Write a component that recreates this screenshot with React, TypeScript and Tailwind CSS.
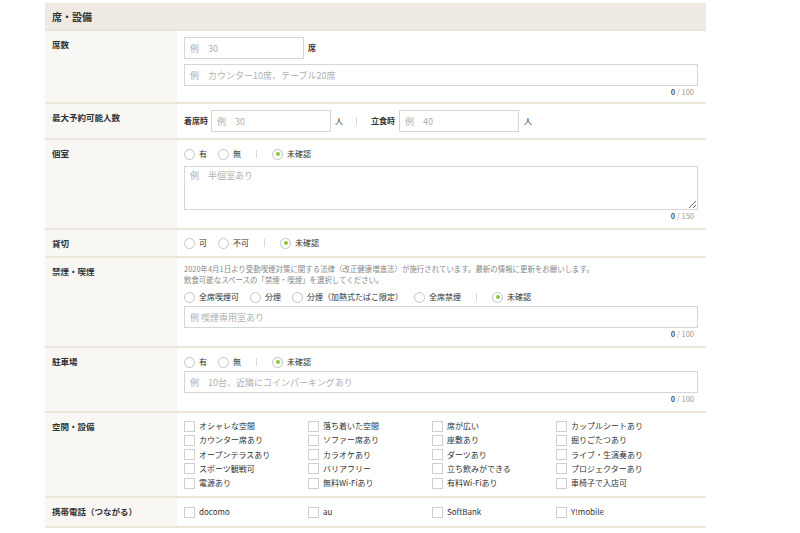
import React from "react";

const font = { fontFamily: '"Noto Sans CJK JP", "Noto Sans", sans-serif' };

function Radio({ label, checked }: { label: string; checked?: boolean }) {
  return (
    <span className="flex items-center mr-[11px]">
      <span className="w-[11px] h-[11px] rounded-full border border-[#c4c4c4] bg-white flex items-center justify-center shrink-0">
        {checked && <span className="w-[4px] h-[4px] rounded-full bg-[#8cc63f]" />}
      </span>
      <span className="ml-[4px] text-[8px] text-[#333] whitespace-nowrap">{label}</span>
    </span>
  );
}

function Sep() {
  return <span className="w-px h-[8px] bg-[#d8d8d8] ml-[4px] mr-[15px]" />;
}

function Check({ label }: { label: string }) {
  return (
    <span className="flex items-center h-[14.25px]">
      <span className="w-[11px] h-[11px] border border-[#cfcfcf] bg-white shrink-0" />
      <span className="ml-[4px] text-[8px] text-[#333] whitespace-nowrap">{label}</span>
    </span>
  );
}

function Counter({ max }: { max: number }) {
  return (
    <div className="h-[12px] leading-[12px] text-right pr-[4px] text-[7.5px] text-[#999]">
      <span className="text-[#555] font-bold">0</span> / {max}
    </div>
  );
}

function TextInput({ placeholder, className }: { placeholder: string; className?: string }) {
  return (
    <input
      placeholder={placeholder}
      style={font}
      className={
        "h-[22px] border border-[#d6d6d6] bg-white px-[5px] text-[9px] text-[#333] placeholder:text-[#b0b0b0] outline-none " +
        (className || "")
      }
    />
  );
}

function Row({ label, children, contentClass }: { label: string; children: React.ReactNode; contentClass: string }) {
  return (
    <div className="flex border-b-2 border-[#ebe6d8]">
      <div className="w-[132px] shrink-0 bg-[#f8f7f3] pl-[7px] pt-[7px] text-[8.5px] leading-[12px] font-bold text-[#333]">
        {label}
      </div>
      <div className={"flex-1 pl-[7px] pr-[8px] " + contentClass}>{children}</div>
    </div>
  );
}

export default function App() {
  const facilities = [
    "オシャレな空間",
    "落ち着いた空間",
    "席が広い",
    "カップルシートあり",
    "カウンター席あり",
    "ソファー席あり",
    "座敷あり",
    "掘りごたつあり",
    "オープンテラスあり",
    "カラオケあり",
    "ダーツあり",
    "ライブ・生演奏あり",
    "スポーツ観戦可",
    "バリアフリー",
    "立ち飲みができる",
    "プロジェクターあり",
    "電源あり",
    "無料Wi-Fiあり",
    "有料Wi-Fiあり",
    "車椅子で入店可",
  ];
  const carriers = ["docomo", "au", "SoftBank", "Y!mobile"];

  return (
    <div className="w-[800px] h-[533px] bg-white overflow-hidden" style={font}>
      <div className="ml-[45px] w-[661px] pt-[3px]">
        <div className="border-t border-[#ebe6d8] border-b-2 bg-[#efebe4] h-[28px] pl-[7px] flex items-center text-[10px] font-bold text-[#333]">
          席・設備
        </div>

        <Row label="席数" contentClass="pt-[6px] pb-[4px]">
          <div className="flex items-center">
            <TextInput placeholder="例　30" className="w-[120px]" />
            <span className="ml-[4px] text-[8px] font-bold text-[#333]">席</span>
          </div>
          <TextInput placeholder="例　カウンター10席、テーブル20席" className="w-full mt-[5px] block" />
          <Counter max={100} />
        </Row>

        <Row label="最大予約可能人数" contentClass="pt-[6px] pb-[6px]">
          <div className="flex items-center text-[8px] text-[#333]">
            <span className="font-bold mr-[3px]">着席時</span>
            <TextInput placeholder="例　30" className="w-[120px]" />
            <span className="ml-[4px]">人</span>
            <span className="w-px h-[8px] bg-[#d8d8d8] ml-[13px] mr-[14px]" />
            <span className="font-bold mr-[4px]">立食時</span>
            <TextInput placeholder="例　40" className="w-[120px]" />
            <span className="ml-[5px]">人</span>
          </div>
        </Row>

        <Row label="個室" contentClass="pt-[7px] pb-[6px]">
          <div className="flex items-center h-[14px]">
            <Radio label="有" />
            <Radio label="無" />
            <Sep />
            <Radio label="未確認" checked />
          </div>
          <textarea
            placeholder="例　半個室あり"
            style={font}
            className="block w-full h-[44px] mt-[5px] border border-[#d6d6d6] bg-white px-[5px] py-[2px] text-[9px] text-[#333] placeholder:text-[#b0b0b0] outline-none"
          />
          <Counter max={150} />
        </Row>

        <Row label="貸切" contentClass="pt-[6px] pb-[6px]">
          <div className="flex items-center h-[14px]">
            <Radio label="可" />
            <Radio label="不可" />
            <Sep />
            <Radio label="未確認" checked />
          </div>
        </Row>

        <Row label="禁煙・喫煙" contentClass="pt-[5px] pb-[6px]">
          <div className="text-[7.45px] leading-[11px] text-[#888] whitespace-nowrap">
            <div>2020年4月1日より受動喫煙対策に関する法律（改正健康増進法）が施行されています。最新の情報に更新をお願いします。</div>
            <div>飲食可能なスペースの「禁煙・喫煙」を選択してください。</div>
          </div>
          <div className="flex items-center h-[14px] mt-[5px]">
            <Radio label="全席喫煙可" />
            <Radio label="分煙" />
            <Radio label="分煙（加熱式たばこ限定）" />
            <Radio label="全席禁煙" />
            <Sep />
            <Radio label="未確認" checked />
          </div>
          <TextInput placeholder="例 喫煙専用室あり" className="w-full mt-[2px] block" />
          <Counter max={100} />
        </Row>

        <Row label="駐車場" contentClass="pt-[7px] pb-[6px]">
          <div className="flex items-center h-[14px]">
            <Radio label="有" />
            <Radio label="無" />
            <Sep />
            <Radio label="未確認" checked />
          </div>
          <TextInput placeholder="例　10台、近隣にコインパーキングあり" className="w-full mt-[2px] block" />
          <Counter max={100} />
        </Row>

        <Row label="空間・設備" contentClass="pt-[6px] pb-[6px]">
          <div className="grid grid-cols-[124px_124px_124px_124px]">
            {facilities.map((f) => (
              <Check key={f} label={f} />
            ))}
          </div>
        </Row>

        <Row label="携帯電話（つながる）" contentClass="pt-[7px] pb-[6px]">
          <div className="grid grid-cols-[124px_124px_124px_124px]">
            {carriers.map((f) => (
              <Check key={f} label={f} />
            ))}
          </div>
        </Row>
      </div>
    </div>
  );
}
